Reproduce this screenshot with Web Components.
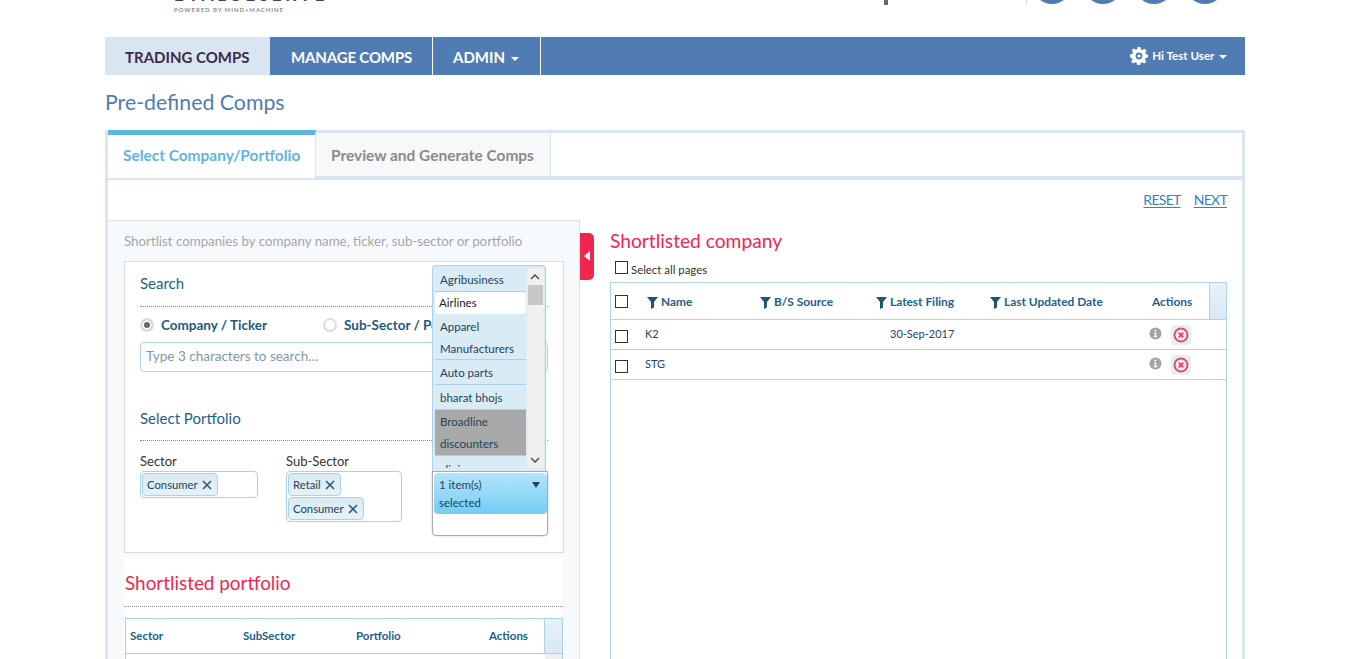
<!DOCTYPE html>
<html>
<head>
<meta charset="utf-8">
<title>Pre-defined Comps</title>
<style>
	html, body { margin: 0; padding: 0; height: 659px; overflow: hidden; background: #fff; }
	body { font-family: Lato, "Open Sans", sans-serif; }
</style>
</head>
<body>
<comps-page></comps-page>

<script>
const FILTER = `<svg class="fn" width="11" height="12" viewBox="0 0 11 12"><path d="M0 0h11L7 5v5.500L4 12V5z" fill="#22566f"/></svg>`;

class TopHeader extends HTMLElement {
	constructor() {
		super();
		this.attachShadow({ mode: 'open' }).innerHTML = `
		<style>
			:host { display: block; height: 37px; position: relative; overflow: hidden; }
			.logo { position: absolute; left: 174px; top: -13px; font: 700 17px/16px Lato, sans-serif; letter-spacing: 3.6px; color: #444; white-space: nowrap; }
			.sub { position: absolute; left: 174px; top: 6px; font: 700 6px/8px Lato, sans-serif; letter-spacing: .92px; color: #8e8e8e; white-space: nowrap; }
			.tick { position: absolute; left: 884px; top: 0; width: 4px; height: 5px; background: #666; }
			.sep { position: absolute; left: 1026px; top: 0; width: 1px; height: 5px; background: #ddd; }
			.dot { position: absolute; top: -36px; width: 40px; height: 40px; border-radius: 50%; background: #507cb3; }
		</style>
		<div class="logo">EVALUESERVE</div>
		<div class="sub">POWERED BY MIND+MACHINE</div>
		<div class="tick"></div>
		<div class="sep"></div>
		<div class="dot" style="left:1032px"></div>
		<div class="dot" style="left:1083px"></div>
		<div class="dot" style="left:1134px"></div>
		<div class="dot" style="left:1185px"></div>`;
	}
}

class MainNav extends HTMLElement {
	constructor() {
		super();
		this.attachShadow({ mode: 'open' }).innerHTML = `
		<style>
			:host { display: flex; height: 38px; margin: 0 104px 0 105px; background: #507cb3; font: 700 15px/40px Lato, sans-serif; color: #fff; }
			.item { box-sizing: border-box; border-right: 1px solid #fff; white-space: nowrap; }
			.active { width: 165px; padding-left: 20px; background: #d9e6f1; color: #3c2a4d; border-right: 0; }
			.manage { width: 163px; padding-left: 21px; letter-spacing: -.15px; }
			.admin { width: 108px; padding-left: 20px; }
			.caret { display: inline-block; width: 0; height: 0; margin-left: 2px; vertical-align: middle; border: 4px solid transparent; border-top-color: currentColor; border-bottom: 0; }
			.user { margin-left: auto; padding-right: 18px; display: flex; align-items: center; font-size: 11.6px; line-height: 38px; gap: 4px; }
			svg { display: block; }
		</style>
		<div class="item active">TRADING COMPS</div>
		<div class="item manage">MANAGE COMPS</div>
		<div class="item admin">ADMIN <span class="caret"></span></div>
		<div class="user">
			<svg width="18" height="18" viewBox="0 0 18 18"><path fill="#fff" fill-rule="evenodd" d="M7.500 0h3l.4 2.400 1.600.7 2-1.400 2.100 2.100-1.400 2 .7 1.600 2.100.1v3l-2.400.4-.7 1.600 1.400 2-2.100 2.100-2-1.400-1.600.7-.4 2.400h-3l-.4-2.400-1.600-.7-2 1.400-2.100-2.100 1.400-2-.7-1.600L0 10.500v-3l2.400-.4.7-1.600-1.400-2 2.100-2.100 2 1.400 1.600-.7zM9 5.600a3.400 3.400 0 1 0 0 6.800 3.400 3.400 0 0 0 0-6.800zM9 7.400a1.600 1.600 0 1 1 0 3.200 1.600 1.600 0 0 1 0-3.200z"/></svg>
			<span>Hi Test User <span class="caret"></span></span>
		</div>`;
	}
}

class TabPanel extends HTMLElement {
	constructor() {
		super();
		this.attachShadow({ mode: 'open' }).innerHTML = `
		<style>
			:host { display: block; box-sizing: border-box; height: 529px; margin: 0 104px 0 105px; border: 3px solid #d9e6f1; border-bottom: 0; }
			.tabs { display: flex; height: 43px; border-bottom: 4px solid #d9e6f1; font: 700 15.45px/44px Lato, sans-serif; }
			.tab { box-sizing: border-box; white-space: nowrap; }
			.on { width: 208px; margin-top: -3px; height: 48px; padding-left: 15px; border-top: 5px solid #5fb4e2; border-right: 1px solid #d9e6f1; color: #5fb4e2; background: #fff; line-height: 40px; position: relative; z-index: 1; }
			.off { width: 235px; height: 43px; padding-left: 15px; background: #f7f8f9; border-right: 1px solid #d9e6f1; color: #8a8a8a; }
			.body { position: relative; }
			.links { height: 40px; padding-right: 15px; display: flex; justify-content: flex-end; gap: 13px; font: 14px/40px Lato, sans-serif; letter-spacing: -.7px; color: #2f85c4; }
			.links u { text-underline-offset: 2px; }
		</style>
		<div class="tabs">
			<div class="tab on">Select Company/Portfolio</div>
			<div class="tab off">Preview and Generate Comps</div>
		</div>
		<div class="body">
			<div class="links"><u>RESET</u><u>NEXT</u></div>
			<slot></slot>
		</div>`;
	}
}

class ChipBox extends HTMLElement {
	constructor() {
		super();
		const items = (this.getAttribute('items') || '').split(',');
		this.attachShadow({ mode: 'open' }).innerHTML = `
		<style>
			:host { display: flex; flex-direction: column; align-items: flex-start; gap: 1px; box-sizing: border-box; padding: 1px; border: 1px solid #a9d2e6; border-radius: 4px; background: #fff; }
			.chip { box-sizing: border-box; height: 23px; padding: 0 5px 0 4px; border: 1px solid #a9d2e6; border-radius: 4px; background: linear-gradient(#d9ebf5, #e6f2f8); font: 11.3px/21px Lato, sans-serif; color: #22445a; white-space: nowrap; }
			svg { margin-left: 4px; vertical-align: -1px; }
		</style>
		${items.map(t => `<div class="chip">${t}<svg width="10" height="10" viewBox="0 0 10 10"><path d="M1 1l8 8M9 1l-8 8" stroke="#2c5a75" stroke-width="1.600"/></svg></div>`).join('')}`;
	}
}

class ListBox extends HTMLElement {
	constructor() {
		super();
		this.attachShadow({ mode: 'open' }).innerHTML = `
		<style>
			:host { position: absolute; left: 324px; top: 85px; z-index: 5; width: 116px; box-sizing: border-box; font: 11.5px/22px Lato, sans-serif; color: #22445a; }
			.list { position: relative; width: 114px; height: 206px; box-sizing: border-box; overflow: hidden; border: 1px solid #a9d2e6; border-bottom: 0; border-radius: 4px 4px 0 0; background: #d9ebf5; }
			.row { box-sizing: border-box; margin-left: 2px; width: 91px; padding-left: 5px; border-bottom: 1px solid #a9d2e6; }
			.agri { height: 26px; line-height: 28px; }
			.air { height: 22px; line-height: 21px; padding-left: 4px; background: #fff; border: 0; border-radius: 3px; color: #222; }
			.app { height: 46px; padding-top: 2px; }
			.auto { height: 25px; line-height: 25px; }
			.bharat { height: 25px; line-height: 26px; }
			.sel { height: 46px; padding-top: 1px; background: #a9a9a9; }
			.clinic { height: 12px; overflow: hidden; border: 0; padding-top: 3px; }
			.bar { position: absolute; right: 1px; top: 2px; width: 17px; bottom: 3px; background: #f0f0f0; }
			.thumb { position: absolute; left: 1px; right: 1px; top: 17px; height: 20px; background: #c8c8c8; }
			.bar svg { position: absolute; left: 3px; }
			.btnwrap { height: 65px; box-sizing: border-box; border: 1px solid #aaa; border-radius: 0 0 4px 4px; background: #fff; box-shadow: 0 0 2px rgba(0,0,0,.25); padding: 1px 0 1px 1px; }
			.btn { position: relative; height: 41px; box-sizing: border-box; padding: 3px 32px 0 5px; border-radius: 4px; background: linear-gradient(#b4e4fb, #74cdf4); line-height: 18px; color: #22445a; }
			.btn i { position: absolute; right: 7px; top: 9px; width: 0; height: 0; border: 4px solid transparent; border-top: 6px solid #22445a; border-bottom: 0; }
		</style>
		<div class="list">
			<div class="row agri">Agribusiness</div>
			<div class="row air">Airlines</div>
			<div class="row app">Apparel Manufacturers</div>
			<div class="row auto">Auto parts</div>
			<div class="row bharat">bharat bhojs</div>
			<div class="row sel">Broadline discounters</div>
			<div class="row clinic">clinic</div>
			<div class="bar">
				<svg style="top:6px" width="10" height="6" viewBox="0 0 10 6"><path d="M1 5l4-4 4 4" fill="none" stroke="#555" stroke-width="1.600"/></svg>
				<svg style="bottom:5px" width="10" height="6" viewBox="0 0 10 6"><path d="M1 1l4 4 4-4" fill="none" stroke="#555" stroke-width="1.600"/></svg>
				<div class="thumb"></div>
			</div>
		</div>
		<div class="btnwrap"><div class="btn">1 item(s) selected<i></i></div></div>`;
	}
}

class SearchPanel extends HTMLElement {
	constructor() {
		super();
		this.attachShadow({ mode: 'open' }).innerHTML = `
		<style>
			:host { display: block; flex: none; box-sizing: border-box; width: 472px; height: 439px; border: 1px solid #e0e0e0; border-left: 0; border-bottom: 0; background: #f6fafd; padding: 0 15px 0 16px; overflow: hidden; font-family: Lato, sans-serif; }
			.hint { height: 40px; font-size: 13.3px; line-height: 41px; color: #a6a6a6; white-space: nowrap; }
			.card { box-sizing: border-box; height: 292px; width: 440px; border: 1px solid #ddd; background: #fff; padding: 0 15px; }
			h3 { margin: 0; font: 400 15px/22px Lato, sans-serif; color: #1d6188; }
			.h1 { padding-top: 10px; height: 45px; box-sizing: border-box; border-bottom: 1px dotted #888; }
			.radios { display: flex; height: 35px; box-sizing: border-box; align-items: center; font: 700 13.5px/16px Lato, sans-serif; color: #1d5a80; }
			.radio { display: flex; align-items: center; gap: 7px; white-space: nowrap; }
			.radio.first { width: 183px; }
			.radio i { box-sizing: border-box; width: 14px; height: 14px; border: 2px solid #ddd; border-radius: 50%; background: #fff; display: block; }
			.radio i.c { background: #666; box-shadow: inset 0 0 0 2px #fff; }
			.input { box-sizing: border-box; height: 30px; width: 408px; border: 1px solid #a9d2e6; border-radius: 4px; padding: 0 5px; font: 13.5px/27px Lato, sans-serif; color: #7f9aa8; }
			.h2 { margin-top: 35px; height: 34px; box-sizing: border-box; border-bottom: 1px dotted #888; line-height: 22px; }
			.cols { display: flex; margin-top: 11px; font: 13px/19px Lato, sans-serif; color: #333; }
			.c1 { width: 118px; margin-right: 28px; }
			.c2 { width: 116px; }
			.short { height: 110px; width: 439px; background: #fff; margin-top: 5px; }
			.short h2 { margin: 0; padding: 12px 0 0 1px; height: 49px; box-sizing: border-box; font: 400 18.9px/26px Lato, sans-serif; color: #f0264f; border-bottom: 1px dotted #888; }
			.thead { display: flex; box-sizing: border-box; margin: 11px 0 0 1px; height: 36px; width: 438px; padding-left: 4px; border: 1px solid #a9d2e6; font: 700 11.5px/34px Lato, sans-serif; color: #1d6188; }
			.thead span { display: block; }
			.thead .g { margin-left: auto; width: 17px; border-left: 1px solid #a9d2e6; background: linear-gradient(#e6f1f7, #d7e9f3); }
			.tbody { display: flex; justify-content: flex-end; box-sizing: border-box; margin-left: 1px; height: 10px; width: 438px; border-left: 1px solid #a9d2e6; border-right: 1px solid #a9d2e6; }
			.tbody div { width: 17px; background: #f0f0f0; }
		</style>
		<div class="hint">Shortlist companies by company name, ticker, sub-sector or portfolio</div>
		<div class="card">
			<h3 class="h1">Search</h3>
			<div class="radios">
				<div class="radio first"><i class="c"></i>Company / Ticker</div>
				<div class="radio"><i></i>Sub-Sector / Portfolio</div>
			</div>
			<div class="input">Type 3 characters to search…</div>
			<h3 class="h2">Select Portfolio</h3>
			<div class="cols">
				<div class="c1">Sector<chip-box items="Consumer"></chip-box></div>
				<div class="c2">Sub-Sector<chip-box items="Retail,Consumer"></chip-box></div>
			</div>
		</div>
		<div class="short">
			<h2>Shortlisted portfolio</h2>
			<div class="thead">
				<span style="width:113px">Sector</span><span style="width:113px">SubSector</span><span style="width:133px">Portfolio</span><span>Actions</span>
				<div class="g"></div>
			</div>
			<div class="tbody"><div></div></div>
		</div>`;
	}
}

class CompanyTable extends HTMLElement {
	constructor() {
		super();
		const acts = `<div class="acts">
			<svg width="13" height="13" viewBox="0 0 13 13"><circle cx="6.500" cy="6.500" r="6" fill="#a3a3a3"/><path d="M5.300 2.700h2v1.600h-2zM5 5.400h2.300v3.700h.8v1.200H4.900V9.100h.8V6.600H5z" fill="#fff"/></svg>
			<div class="x"><svg width="16" height="16" viewBox="0 0 16 16"><circle cx="8" cy="8" r="6.500" fill="none" stroke="#e8486f" stroke-width="2"/><path d="M5.800 5.800l4.400 4.400M10.200 5.800l-4.400 4.400" stroke="#e8486f" stroke-width="2"/></svg></div>
		</div>`;
		this.attachShadow({ mode: 'open' }).innerHTML = `
		<style>
			:host { display: block; flex: none; width: 617px; margin-left: 30px; font-family: Lato, sans-serif; }
			h2 { margin: 0; padding-top: 9px; height: 40px; box-sizing: border-box; font: 400 19.2px/24px Lato, sans-serif; color: #f0264f; }
			.all { height: 22px; display: flex; align-items: center; font: 11.4px/14px Lato, sans-serif; color: #333; padding-left: 5px; gap: 3px; }
			.all span { margin-top: -2px; }
			.cb { display: block; box-sizing: border-box; width: 13px; height: 13px; border: 1px solid #333; background: #fff; }
			.all .cb { margin-top: -7px; }
			.table { box-sizing: border-box; height: 377px; border: 1px solid #add6e8; border-bottom: 0; color: #22445a; }
			.head { display: grid; grid-template-columns: 36px 113px 116px 114px 162px 1fr 17px; align-items: center; box-sizing: border-box; height: 37px; border-bottom: 1px solid #add6e8; font: 700 11.9px/14px Lato, sans-serif; color: #1d6188; }
			.head span { white-space: nowrap; display: flex; align-items: center; gap: 3px; padding-top: 2px; }
			.head .g { align-self: stretch; border-left: 1px solid #add6e8; background: linear-gradient(#e8f2f8, #d7e9f3); }
			.head .cb { margin-left: 4px; }
			.head .fn { margin-top: 2px; }
			.tr { display: grid; grid-template-columns: 34px 245px 259px 1fr; height: 29px; border-bottom: 1px solid #add6e8; font: 11px/14px Lato, sans-serif; }
			.tr .cb { margin: 10px 0 0 4px; }
			.cell { padding-top: 7px; }
			.acts { display: flex; align-items: flex-start; }
			.acts > svg { margin: 7px 9px 0 0; }
			.x { margin-top: 5px; width: 20px; height: 20px; border-radius: 4px; background: #e4eff6; display: flex; align-items: center; justify-content: center; }
		</style>
		<h2>Shortlisted company</h2>
		<div class="all"><i class="cb"></i><span>Select all pages</span></div>
		<div class="table">
			<div class="head">
				<i class="cb"></i>
				<span>${FILTER}Name</span>
				<span>${FILTER}B/S Source</span>
				<span>${FILTER}Latest Filing</span>
				<span>${FILTER}Last Updated Date</span>
				<span>Actions</span>
				<div class="g"></div>
			</div>
			<div class="tr"><i class="cb"></i><div class="cell">K2</div><div class="cell">30-Sep-2017</div>${acts}</div>
			<div class="tr"><i class="cb"></i><div class="cell">STG</div><div></div>${acts}</div>
		</div>`;
	}
}

class CompsPage extends HTMLElement {
	constructor() {
		super();
		this.attachShadow({ mode: 'open' }).innerHTML = `
		<style>
			:host { display: block; }
			.title { margin: 0 105px; height: 55px; padding-top: 12px; box-sizing: border-box; font: 400 21.3px/30px Lato, sans-serif; color: #507cb3; }
			.split { display: flex; align-items: flex-start; }
			.toggle { position: absolute; left: 472px; top: 53px; width: 14px; height: 47px; border-radius: 0 5px 5px 0; background: #f0264f; }
			.toggle::after { content: ""; position: absolute; left: 4px; top: 18px; border: 5px solid transparent; border-left: 0; border-right: 6px solid #fff; }
		</style>
		<top-header></top-header>
		<main-nav></main-nav>
		<div class="title">Pre-defined Comps</div>
		<tab-panel>
			<div class="split">
				<search-panel></search-panel>
				<company-table></company-table>
			</div>
			<div class="toggle"></div>
			<list-box></list-box>
		</tab-panel>`;
	}
}

customElements.define('top-header', TopHeader);
customElements.define('main-nav', MainNav);
customElements.define('tab-panel', TabPanel);
customElements.define('chip-box', ChipBox);
customElements.define('list-box', ListBox);
customElements.define('search-panel', SearchPanel);
customElements.define('company-table', CompanyTable);
customElements.define('comps-page', CompsPage);
</script>
</body>
</html>
